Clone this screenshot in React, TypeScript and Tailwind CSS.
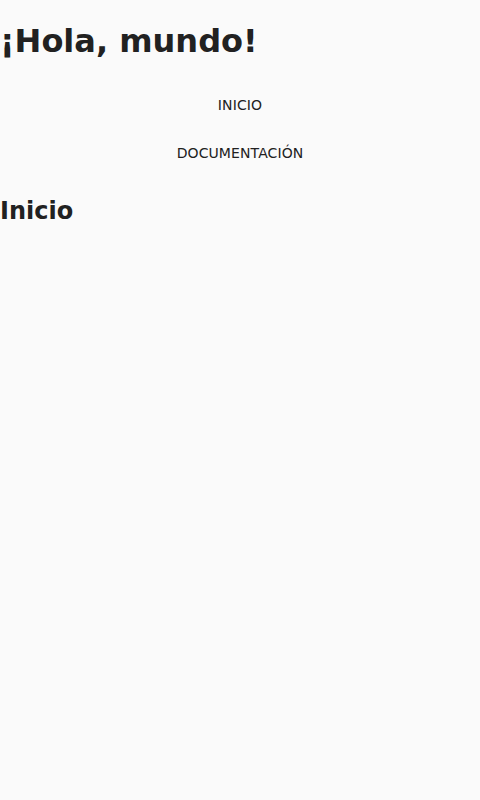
import React from 'react';

export default function App() {
  return (
    <div className="min-h-[800px] bg-[#fafafa] text-[#212121] font-['DejaVu_Sans',sans-serif] pt-[23px]">
      <h1 className="text-[32px] font-bold leading-[37px] mb-[21px]">¡Hola, mundo!</h1>
      <nav className="flex flex-col items-center text-[14px] tracking-[0.1px]">
        <a className="py-[15px] leading-[18px]">INICIO</a>
        <a className="py-[15px] leading-[18px]">DOCUMENTACIÓN</a>
      </nav>
      <h2 className="text-[24px] font-bold leading-[28px] my-[20px]">Inicio</h2>
    </div>
  );
}
